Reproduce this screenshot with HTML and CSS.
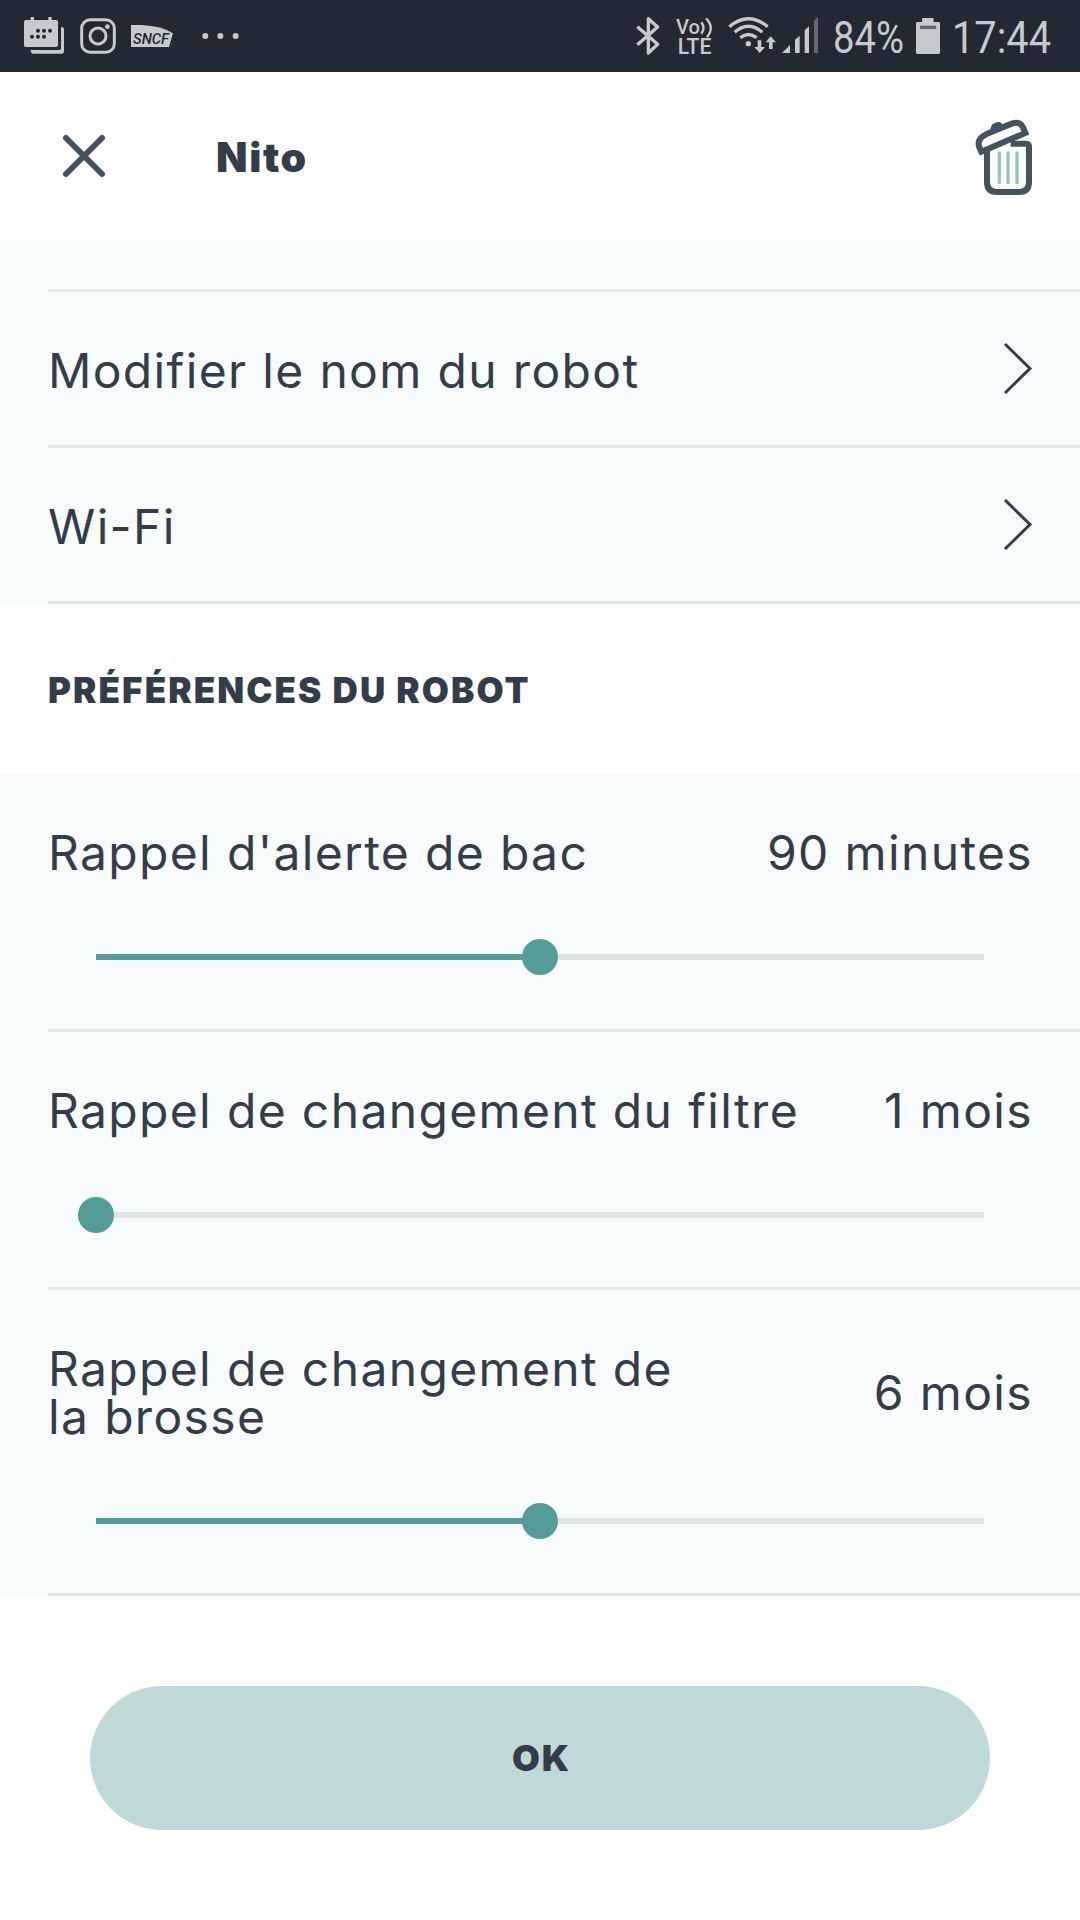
FILE: index.html
```
<!DOCTYPE html>
<html lang="fr">
<head>
    <meta charset="UTF-8">
    <meta name="viewport" content="width=device-width, initial-scale=1.0">
    <title>Nito</title>
    <link rel="stylesheet" href="styles.css">
</head>
<body>

    <!-- Status bar -->
    <div class="status-bar">
        <div class="status-left">
            <svg width="41" height="72" viewBox="72 0 123 216">
                <path d="M78 60H92V51H102V60H145V51H155V60H168Q174 60 174 66V135Q174 141 168 141H78Q72 141 72 135V66Q72 60 78 60Z"/>
                <path d="M183 81Q192 81 192 87V153Q192 161 184 161H100Q92 161 92 150H178Q183 150 183 145Z"/>
                <g class="cutout">
                    <circle cx="114" cy="92" r="6"/><circle cx="132" cy="92" r="6"/><circle cx="150" cy="92" r="6"/>
                    <circle cx="96" cy="110" r="6"/><circle cx="114" cy="110" r="6"/><circle cx="132" cy="110" r="6"/>
                </g>
            </svg>
            <svg width="36" height="72" viewBox="240 0 108 216">
                <rect class="line" x="245" y="59" width="98" height="98" rx="26" stroke-width="9"/>
                <circle class="line" cx="294" cy="108" r="24" stroke-width="9"/>
                <circle cx="322" cy="80" r="7"/>
            </svg>
            <svg width="43" height="72" viewBox="393 0 129 216">
                <path d="M393 75H425Q485 78 519 100L507 141H393Z"/>
                <text class="sncf" x="399" y="132" textLength="108" lengthAdjust="spacingAndGlyphs">SNCF</text>
            </svg>
            <svg class="more" width="37" height="72" viewBox="607 0 111 216">
                <circle cx="617" cy="108" r="9"/><circle cx="662" cy="108" r="9"/><circle cx="708" cy="108" r="9"/>
            </svg>
        </div>
        <div class="status-right">
            <svg width="24" height="72" viewBox="47 0 72 216">
                <path class="line" stroke-width="10" stroke-linejoin="round" d="M51 80L112 133L84 159V56L112 81L51 134"/>
            </svg>
            <svg class="volte" width="37" height="72" viewBox="168 0 111 216">
                <text x="168" y="101" font-size="60" textLength="72" lengthAdjust="spacingAndGlyphs">Vo</text>
                <text x="173" y="161" font-size="64" textLength="101" lengthAdjust="spacingAndGlyphs">LTE</text>
                <path class="line" stroke-width="7" d="M244 67Q257 84 244 101M258 55Q285 81 261 112"/>
            </svg>
            <svg class="wifi" width="48" height="72" viewBox="324 0 144 216">
                <g class="line" stroke-width="10">
                    <path d="M328 80Q385 32 443 80"/>
                    <path d="M344 97Q385 61 427 97"/>
                    <path d="M361 113Q385 94 410 113"/>
                </g>
                <circle cx="385" cy="131" r="8"/>
                <path d="M413 121H424V141H435L419 159L403 141H413ZM447 147H458V127H468L452 109L437 127H447Z"/>
            </svg>
            <svg class="signal" width="36" height="72" viewBox="486 0 108 216">
                <path d="M486 159L510 135V159ZM525 119L539 107V159H525ZM554 91L567 79V159H554Z"/>
                <path class="off" d="M582 62L594 50V159H582Z"/>
            </svg>
            <svg class="battery-text" width="70" height="72" viewBox="0 0 70 72">
                <text x="-1" y="53" font-size="45" textLength="71" lengthAdjust="spacingAndGlyphs">84%</text>
            </svg>
            <svg class="battery" width="24" height="72" viewBox="288 0 72 216">
                <path d="M292 66H306V58Q306 54 310 54H336Q341 54 341 58V66H356Q360 66 360 70V157Q360 162 356 162H292Q288 162 288 157V70Q288 66 292 66Z"/>
                <path class="level" d="M300 77H349V87H300Z"/>
            </svg>
            <svg class="clock" width="98" height="72" viewBox="0 0 98 72">
                <text x="-2" y="53" font-size="45" textLength="99" lengthAdjust="spacingAndGlyphs">17:44</text>
            </svg>
        </div>
    </div>

    <!-- Header -->
    <div class="header">
        <svg class="close" width="42" height="42" viewBox="0 0 42 42">
            <path d="M3 3L39 39M39 3L3 39"/>
        </svg>
        <h1>Nito</h1>
        <svg class="trash" width="57" height="78" viewBox="105 84 171 234">
            <path class="outline" d="M141 175V276Q141 306 171 306H237Q267 306 267 276V170Q267 161 258 161H212"/>
            <path class="knob" d="M152 115Q153 102 170 97Q184 94 188 105L188 112L154 126Z"/>
            <path class="outline" d="M124 185L256 129L248 110Q238 93 215 101L138 133Q109 147 118 172Z"/>
            <path class="bars" d="M178 189V278M204 189V278M231 189V278"/>
        </svg>
    </div>

    <!-- Robot settings -->
    <div class="section first">
        <div class="row">
            <span class="label">Modifier le nom du robot</span>
            <svg class="chevron" width="28" height="50" viewBox="0 0 28 50">
                <path d="M1 1L26 25.5L1 50"/>
            </svg>
        </div>
        <div class="row">
            <span class="label">Wi-Fi</span>
            <svg class="chevron" width="28" height="50" viewBox="0 0 28 50">
                <path d="M1 1L26 25.5L1 50"/>
            </svg>
        </div>
    </div>

    <h2>PRÉFÉRENCES DU ROBOT</h2>

    <!-- Reminders -->
    <div class="section">
        <div class="setting">
            <div class="setting-text">
                <span class="label">Rappel d'alerte de bac</span>
                <span class="value">90 minutes</span>
            </div>
            <div class="slider">
                <div class="fill" style="width: 50%"></div>
                <div class="thumb"></div>
            </div>
        </div>
        <div class="setting">
            <div class="setting-text">
                <span class="label">Rappel de changement du filtre</span>
                <span class="value">1 mois</span>
            </div>
            <div class="slider">
                <div class="fill" style="width: 0%"></div>
                <div class="thumb"></div>
            </div>
        </div>
        <div class="setting">
            <div class="setting-text">
                <span class="label">Rappel de changement de<br>la brosse</span>
                <span class="value">6 mois</span>
            </div>
            <div class="slider">
                <div class="fill" style="width: 50%"></div>
                <div class="thumb"></div>
            </div>
        </div>
    </div>

    <div class="footer">
        <button class="ok">OK</button>
    </div>

</body>
</html>
```
FILE: styles.css
```
* {
    box-sizing: border-box;
}

body {
    margin: 0;
    width: 1080px;
    height: 1920px;
    overflow: hidden;
    background: #fff;
    color: #333d4a;
    font-family: Inter, "Open Sans", sans-serif;
}

svg {
    display: block;
    flex: none;
    overflow: visible;
}

/* Status bar */
.status-bar {
    display: flex;
    justify-content: space-between;
    height: 72px;
    padding: 0 28px 0 24px;
    background: #222932;
}

.status-bar svg {
    fill: #c7c9cc;
    font-family: Roboto, sans-serif;
}

.status-left,
.status-right {
    display: flex;
}

.status-left {
    gap: 15px;
}

.status-left .more {
    margin-left: 13px;
}

.status-bar .cutout,
.status-bar .sncf {
    fill: #222932;
}

.sncf {
    font-size: 41px;
    font-style: italic;
    font-weight: 500;
}

.status-bar .line {
    fill: none;
    stroke: #c7c9cc;
}

.volte {
    margin-left: 16px;
    font-weight: 500;
}

.wifi {
    margin-left: 15px;
}

.signal {
    margin-left: 6px;
}

.status-bar .off {
    fill: #646971;
}

.battery-text {
    margin-left: 16px;
}

.battery {
    margin-left: 12px;
}

.status-bar .level {
    fill: #646971;
}

.clock {
    margin-left: 14px;
}

/* Header */
.header {
    display: flex;
    align-items: center;
    height: 168px;
    padding: 0 48px 0 63px;
}

.close {
    stroke: #445161;
    stroke-width: 6;
    stroke-linecap: round;
}

h1 {
    flex: 1;
    margin: 2px 0 0 111px;
    font-size: 41px;
    font-weight: 900;
    line-height: 48px;
    letter-spacing: 1.6px;
}

.trash {
    margin-top: 2px;
    fill: none;
}

.trash .outline {
    fill: #fff;
    stroke: #445161;
    stroke-width: 18;
}

.trash .knob {
    fill: #445161;
}

.trash .bars {
    stroke: #95c4c0;
    stroke-width: 10;
    stroke-linecap: round;
}

/* Lists */
.section {
    padding-left: 48px;
    background: #f7fbfc;
}

.first {
    padding-top: 49px;
}

.row {
    display: flex;
    justify-content: space-between;
    align-items: center;
    height: 156px;
    padding-right: 48px;
    border-top: 3px solid #dde9e8;
}

.row:last-child {
    height: 159px;
    border-bottom: 3px solid #dde9e8;
}

.label,
.value {
    font-size: 48px;
    line-height: 48px;
    letter-spacing: 1.35px;
}

.value {
    margin-right: -1px;
}

.row .label {
    padding-top: 5px;
}

.chevron {
    margin-bottom: 2px;
}

.chevron path {
    fill: none;
    stroke: #333d4a;
    stroke-width: 3;
}

h2 {
    height: 170px;
    margin: 0;
    padding: 62px 0 0 48px;
    font-size: 35px;
    font-weight: 900;
    line-height: 48px;
    letter-spacing: 2.1px;
}

/* Sliders */
.setting {
    padding: 55px 48px 69px 0;
    border-bottom: 3px solid #dde9e8;
}

.setting-text {
    display: flex;
    justify-content: space-between;
    align-items: center;
}

.slider {
    display: flex;
    align-items: center;
    height: 6px;
    margin: 77px 48px 0;
    background: #e0e3e4;
}

.fill {
    height: 6px;
    background: #549c9a;
}

.thumb {
    flex: none;
    width: 36px;
    height: 36px;
    margin-left: -18px;
    border-radius: 50%;
    background: #549c9a;
}

/* Footer */
.footer {
    padding: 90px 90px 0;
}

.ok {
    display: block;
    width: 100%;
    height: 144px;
    padding: 0 0 0 3px;
    border: none;
    border-radius: 72px;
    background: #bfd9d8;
    color: #333d4a;
    font-family: inherit;
    font-size: 36px;
    font-weight: 900;
    letter-spacing: 2px;
    cursor: pointer;
}
```
